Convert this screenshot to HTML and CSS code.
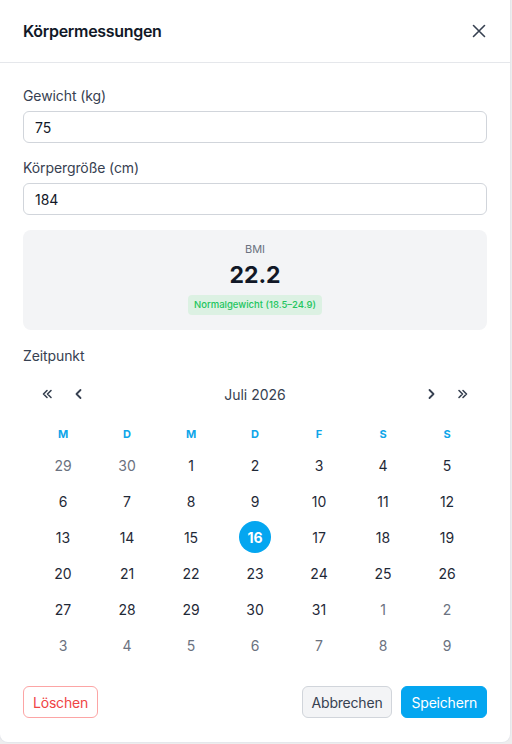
FILE: index.html
```html
<!DOCTYPE html>
<html lang="de">
<head>
<meta charset="utf-8">
<title>Körpermessungen</title>
<link rel="stylesheet" href="styles.css">
</head>
<body>
<div class="modal">
  <header class="modal-header">
    <h2 class="modal-title">Körpermessungen</h2>
    <button class="icon-btn close-btn" aria-label="Schließen">
      <svg width="16" height="16" viewBox="0 0 16 16" fill="none" stroke="currentColor" stroke-width="1.6" stroke-linecap="round"><path d="M2.5 2.5l11 11M13.5 2.5l-11 11"/></svg>
    </button>
  </header>

  <div class="modal-body">
    <label class="field">
      <span class="field-label">Gewicht (kg)</span>
      <input class="input" type="text" value="75">
    </label>
    <label class="field">
      <span class="field-label">Körpergröße (cm)</span>
      <input class="input" type="text" value="184">
    </label>

    <div class="bmi-box">
      <div class="bmi-label">BMI</div>
      <div class="bmi-value">22.2</div>
      <span class="bmi-badge">Normalgewicht (18.5–24.9)</span>
    </div>

    <div class="field-label date-label">Zeitpunkt</div>

    <div class="calendar">
      <div class="cal-nav">
        <button class="nav-btn" aria-label="Vorheriges Jahr">
          <svg width="16" height="16" viewBox="0 0 16 16" fill="none" stroke="currentColor" stroke-width="1.6" stroke-linecap="round" stroke-linejoin="round"><path d="M8 4.5L4.5 8 8 11.5M12 4.5L8.5 8 12 11.5"/></svg>
        </button>
        <button class="nav-btn" aria-label="Vorheriger Monat">
          <svg width="16" height="16" viewBox="0 0 16 16" fill="none" stroke="currentColor" stroke-width="1.8" stroke-linecap="round" stroke-linejoin="round"><path d="M9.5 4L5.5 8l4 4"/></svg>
        </button>
        <div class="cal-title">Juli 2026</div>
        <button class="nav-btn" aria-label="Nächster Monat">
          <svg width="16" height="16" viewBox="0 0 16 16" fill="none" stroke="currentColor" stroke-width="1.8" stroke-linecap="round" stroke-linejoin="round"><path d="M6.5 4l4 4-4 4"/></svg>
        </button>
        <button class="nav-btn" aria-label="Nächstes Jahr">
          <svg width="16" height="16" viewBox="0 0 16 16" fill="none" stroke="currentColor" stroke-width="1.6" stroke-linecap="round" stroke-linejoin="round"><path d="M4 4.5L7.5 8 4 11.5M8 4.5L11.5 8 8 11.5"/></svg>
        </button>
      </div>

      <div class="cal-grid">
        <div class="wd">M</div><div class="wd">D</div><div class="wd">M</div><div class="wd">D</div><div class="wd">F</div><div class="wd">S</div><div class="wd">S</div>

        <div class="day out">29</div><div class="day out">30</div><div class="day">1</div><div class="day">2</div><div class="day">3</div><div class="day">4</div><div class="day">5</div>
        <div class="day">6</div><div class="day">7</div><div class="day">8</div><div class="day">9</div><div class="day">10</div><div class="day">11</div><div class="day">12</div>
        <div class="day">13</div><div class="day">14</div><div class="day">15</div><div class="day selected"><span>16</span></div><div class="day">17</div><div class="day">18</div><div class="day">19</div>
        <div class="day">20</div><div class="day">21</div><div class="day">22</div><div class="day">23</div><div class="day">24</div><div class="day">25</div><div class="day">26</div>
        <div class="day">27</div><div class="day">28</div><div class="day">29</div><div class="day">30</div><div class="day">31</div><div class="day out">1</div><div class="day out">2</div>
        <div class="day out">3</div><div class="day out">4</div><div class="day out">5</div><div class="day out">6</div><div class="day out">7</div><div class="day out">8</div><div class="day out">9</div>
      </div>
    </div>
  </div>

  <footer class="modal-footer">
    <button class="btn btn-danger">Löschen</button>
    <div class="footer-right">
      <button class="btn btn-secondary">Abbrechen</button>
      <button class="btn btn-primary">Speichern</button>
    </div>
  </footer>
</div>
</body>
</html>
```

FILE: styles.css
```css
* { box-sizing: border-box; }

html, body {
  margin: 0;
  padding: 0;
}

body {
  background: #ededee;
  font-family: Inter, "Noto Sans", "Liberation Sans", sans-serif;
  color: #1f2937;
  width: 512px;
  height: 744px;
  overflow: hidden;
}

.modal {
  width: 510px;
  height: 742px;
  background: #ffffff;
  border-radius: 0 0 8px 8px;
  box-shadow: 0 0 0 1px #e5e7eb;
  display: flex;
  flex-direction: column;
}

.modal-header {
  height: 63px;
  border-bottom: 1px solid #e5e7eb;
  display: flex;
  align-items: center;
  justify-content: space-between;
  padding: 0 23px 0 23px;
}

.modal-title {
  margin: 0;
  font-size: 16px;
  font-weight: 600;
  color: #111827;
  letter-spacing: -0.3px;
}

.icon-btn {
  border: 0;
  background: none;
  padding: 0;
  cursor: pointer;
  color: #374151;
  display: flex;
}

.modal-body {
  padding: 24px 23px 0 23px;
  display: flex;
  flex-direction: column;
}

.field {
  display: flex;
  flex-direction: column;
  gap: 7px;
  margin-bottom: 16px;
}

.field-label {
  font-size: 14px;
  color: #374151;
  line-height: 17px;
  letter-spacing: -0.1px;
}

.input {
  height: 32px;
  border: 1px solid #d1d5db;
  border-radius: 6px;
  padding: 0 11px;
  font-family: inherit;
  font-size: 14px;
  color: #111827;
  outline: none;
}

.bmi-box {
  margin-top: -1px;
  height: 100px;
  background: #f3f4f6;
  border-radius: 8px;
  display: flex;
  flex-direction: column;
  align-items: center;
  padding-top: 12px;
}

.bmi-label {
  font-size: 11px;
  color: #6b7280;
  line-height: 14px;
}

.bmi-value {
  font-size: 23px;
  font-weight: 700;
  color: #111827;
  line-height: 28px;
  margin-top: 5px;
}

.bmi-badge {
  margin-top: 6px;
  background: #dcf1e3;
  color: #22c55e;
  font-size: 9.5px;
  font-weight: 500;
  border-radius: 4px;
  padding: 3px 6px;
  line-height: 14px;
}

.date-label {
  margin-top: 17px;
}

.calendar {
  padding: 0 8px;
  margin-top: 15px;
}

.cal-nav {
  display: flex;
  align-items: center;
  height: 30px;
  color: #374151;
}

.nav-btn {
  border: 0;
  background: none;
  padding: 0;
  width: 32px;
  height: 30px;
  display: flex;
  align-items: center;
  justify-content: center;
  color: #374151;
  cursor: pointer;
}

.cal-title {
  flex: 1;
  text-align: center;
  font-size: 14px;
  color: #374151;
}

.cal-grid {
  margin-top: 12px;
  display: grid;
  grid-template-columns: repeat(7, 1fr);
  grid-template-rows: 26px;
  grid-auto-rows: 36px;
}

.wd {
  font-size: 11px;
  font-weight: 700;
  color: #0ea5e9;
  display: flex;
  align-items: center;
  justify-content: center;
}

.day {
  display: flex;
  align-items: center;
  justify-content: center;
  font-size: 14px;
  color: #1f2937;
}

.day.out {
  color: #6b7280;
}

.day.selected span {
  width: 32px;
  height: 32px;
  border-radius: 50%;
  background: #04a6f0;
  color: #ffffff;
  font-weight: 700;
  display: flex;
  align-items: center;
  justify-content: center;
}

.modal-footer {
  margin-top: auto;
  padding: 0 23px 24px 23px;
  display: flex;
  justify-content: space-between;
  align-items: center;
}

.footer-right {
  display: flex;
  gap: 9px;
}

.btn {
  height: 32px;
  border-radius: 6px;
  font-family: inherit;
  font-size: 14px;
  letter-spacing: -0.2px;
  padding: 0 9px;
  cursor: pointer;
}

.btn-danger {
  background: #ffffff;
  border: 1px solid #fca5a5;
  color: #ef4444;
}

.btn-secondary {
  background: #f3f4f6;
  border: 1px solid #d1d5db;
  color: #374151;
}

.btn-primary {
  background: #04a6f0;
  border: 1px solid #04a6f0;
  color: #ffffff;
}
```
